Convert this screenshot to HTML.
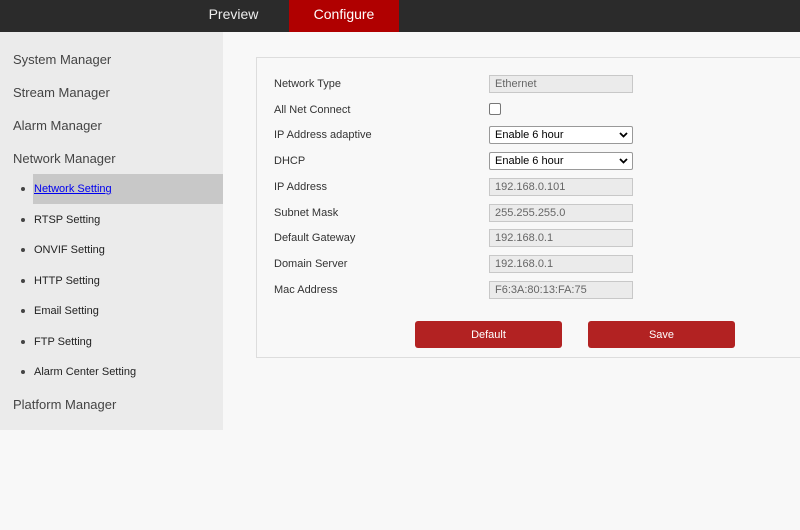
<!DOCTYPE html>
<html><head><meta charset="utf-8"><style>
*{margin:0;padding:0;box-sizing:border-box}
body{width:800px;height:530px;background:#f8f8f8;font-family:"Liberation Sans",sans-serif;position:relative;overflow:hidden}
.top{position:absolute;left:0;top:0;width:800px;height:32px;background:#2b2b2b}
.tab{position:absolute;top:0;height:32px;line-height:29px;color:#fff;font-size:14px;text-align:center}
.side{position:absolute;left:0;top:32px;width:223px;height:398px;background:#ebebeb}
.m{position:absolute;left:13px;font-size:13px;color:#444;line-height:15px}
.s{position:absolute;left:34px;font-size:11px;color:#222;line-height:13px}
.s:before{content:"";position:absolute;left:-13px;top:4px;width:4px;height:4px;border-radius:50%;background:#444}
.hl{position:absolute;left:33px;top:174px;width:190px;height:30px;background:#c8c8c8}
.panel{position:absolute;left:256px;top:57px;width:560px;height:301px;border:1px solid #ddd;background:#f8f8f8}
.l{position:absolute;left:274px;font-size:11px;color:#333;line-height:13px}
.in{position:absolute;left:489px;width:144px;height:18px;border:1px solid #c8c8c8;background:#ebebeb;font-size:11px;color:#666;padding-left:5px;line-height:17px}
.sel{background:#fff;border:1px solid #999;color:#000;border-radius:2px}
.sel svg{position:absolute;right:4px;top:5px}
.cb{position:absolute;left:489px;top:103px;width:12px;height:12px;border:1px solid #777;border-radius:2px;background:#fff}
.btn{position:absolute;top:321px;width:147px;height:27px;background:#b22222;border-radius:3px;color:#fff;font-size:11px;text-align:center;line-height:28px}
</style></head><body>
<div class="top"></div>
<div class="tab" style="left:195px;width:77px;color:#eee">Preview</div>
<div class="tab" style="left:289px;width:110px;background:#b00000">Configure</div>
<div class="side"></div>
<div class="hl"></div>
<div class="m" style="top:52px">System Manager</div>
<div class="m" style="top:85px">Stream Manager</div>
<div class="m" style="top:118px">Alarm Manager</div>
<div class="m" style="top:151px">Network Manager</div>
<div class="s" style="top:183px;color:#00e;text-decoration:underline">Network Setting</div>
<div class="s" style="top:214px">RTSP Setting</div>
<div class="s" style="top:244px">ONVIF Setting</div>
<div class="s" style="top:275px">HTTP Setting</div>
<div class="s" style="top:305px">Email Setting</div>
<div class="s" style="top:336px">FTP Setting</div>
<div class="s" style="top:366px">Alarm Center Setting</div>
<div class="m" style="top:397px">Platform Manager</div>
<div class="panel"></div>
<div class="l" style="top:78px">Network Type</div>
<div class="l" style="top:104px">All Net Connect</div>
<div class="l" style="top:129px">IP Address adaptive</div>
<div class="l" style="top:155px">DHCP</div>
<div class="l" style="top:181px">IP Address</div>
<div class="l" style="top:207px">Subnet Mask</div>
<div class="l" style="top:232px">Default Gateway</div>
<div class="l" style="top:258px">Domain Server</div>
<div class="l" style="top:284px">Mac Address</div>
<div class="in" style="top:75px">Ethernet</div>
<div class="cb"></div>
<div class="in sel" style="top:126px">Enable 6 hour<svg width="9" height="6" viewBox="0 0 9 6"><path d="M1 1l3.5 3.5L8 1" stroke="#000" stroke-width="1.8" fill="none"/></svg></div>
<div class="in sel" style="top:152px">Enable 6 hour<svg width="9" height="6" viewBox="0 0 9 6"><path d="M1 1l3.5 3.5L8 1" stroke="#000" stroke-width="1.8" fill="none"/></svg></div>
<div class="in" style="top:178px">192.168.0.101</div>
<div class="in" style="top:204px">255.255.255.0</div>
<div class="in" style="top:229px">192.168.0.1</div>
<div class="in" style="top:255px">192.168.0.1</div>
<div class="in" style="top:281px">F6:3A:80:13:FA:75</div>
<div class="btn" style="left:415px">Default</div>
<div class="btn" style="left:588px">Save</div>
</body></html>
